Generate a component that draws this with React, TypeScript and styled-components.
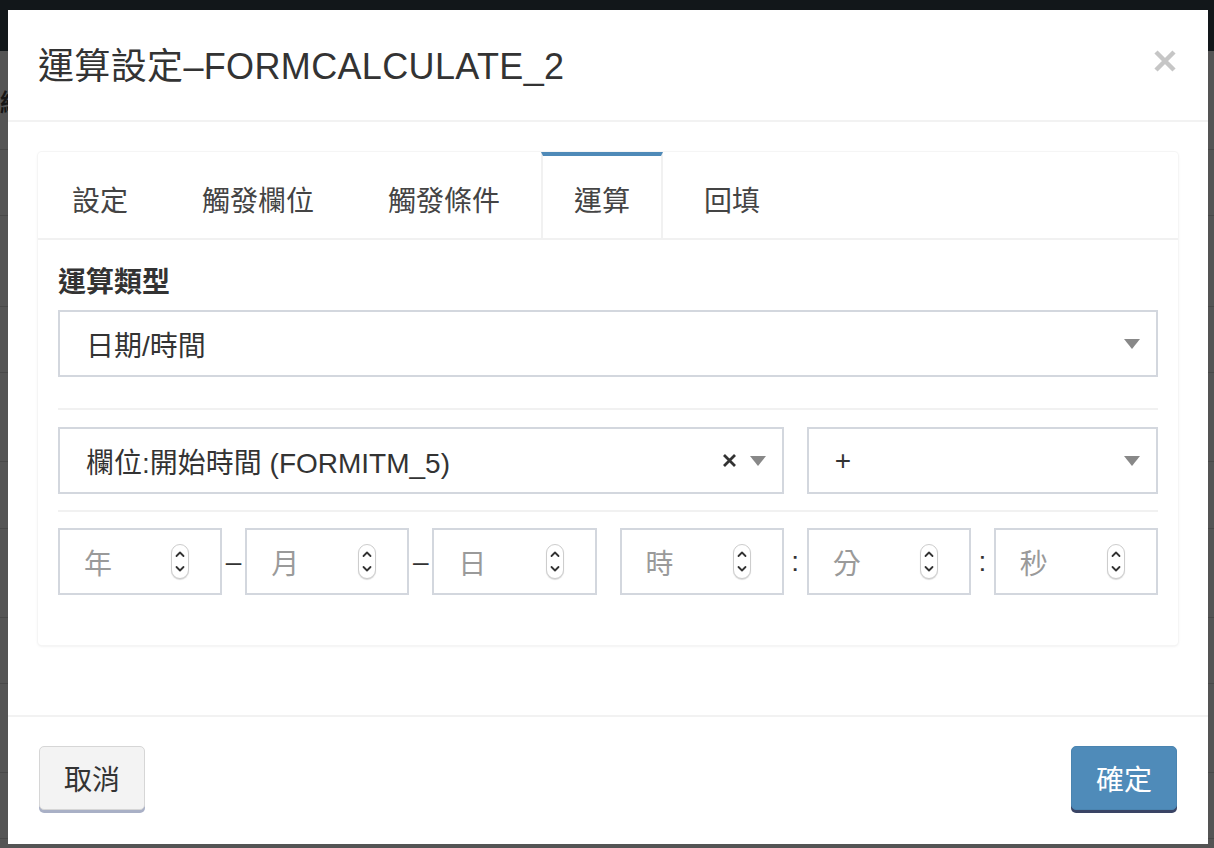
import React from "react";
import styled, { createGlobalStyle } from "styled-components";

const GlobalStyle = createGlobalStyle`
  html, body { margin: 0; padding: 0; background: #545454; }
  body {
    font-family: "Liberation Sans", "Noto Sans CJK TC", sans-serif;
    overflow: hidden;
  }
  * { box-sizing: border-box; }
`;

const Screen = styled.div`
  position: relative;
  width: 1214px;
  height: 848px;
  overflow: hidden;
  background: #545454;
`;

const NavBar = styled.div`
  height: 51px;
  background: #12171a;
`;

const TableRow = styled.div<{ $h: number }>`
  height: ${(p) => p.$h}px;
  border-bottom: 1px solid #484848;
  display: flex;
  align-items: center;
`;

const HeaderCell = styled.span`
  margin-left: 0;
  font-size: 24px;
  font-weight: 700;
  color: #161616;
`;

const Modal = styled.div`
  position: absolute;
  left: 8px;
  top: 10px;
  width: 1200px;
  height: 834px;
  background: #fff;
  display: flex;
  flex-direction: column;
`;

const ModalHeader = styled.div`
  height: 112px;
  padding: 0 30px;
  display: flex;
  align-items: center;
  justify-content: space-between;
  border-bottom: 2px solid #f2f2f2;
`;

const Title = styled.h4`
  margin: 3px 0 0;
  font-size: 36px;
  font-weight: 400;
  line-height: 1;
  letter-spacing: 0.35px;
  color: #333;
`;

const CloseButton = styled.button`
  border: 0;
  background: none;
  padding: 0;
  margin: -8px 2px 0 0;
  width: 22px;
  height: 22px;
  display: flex;
  cursor: pointer;
`;

const ModalBody = styled.div`
  flex: 1;
  padding: 30px 30px 0;
`;

const Card = styled.div`
  height: 493px;
  border-radius: 4px;
  box-shadow: 0 0 0 1px #f5f5f5, 0 1px 3px rgba(0, 0, 0, 0.1);
  background: #fff;
`;

const Tabs = styled.div`
  display: flex;
  gap: 8px;
  padding-left: 1px;
  border-bottom: 2px solid #f1f1f1;
`;

const Tab = styled.div<{ $active?: boolean }>`
  height: 86px;
  padding: 3px 31px 0;
  border: 2px solid ${(p) => (p.$active ? "#f1f1f1" : "transparent")};
  border-top: 4px solid ${(p) => (p.$active ? "#4f8ab8" : "transparent")};
  border-bottom: 0;
  display: flex;
  align-items: center;
  font-size: 28px;
  color: #444;
  white-space: nowrap;
`;

const Panel = styled.div`
  padding: 23px 20px 0;
`;

const Label = styled.div`
  font-size: 28px;
  font-weight: 700;
  line-height: 40px;
  color: #333;
`;

const Field = styled.div<{ $span?: string }>`
  height: 67px;
  border: 2px solid #d3d7de;
  display: flex;
  align-items: center;
  padding: 0 16px 0 26px;
  font-size: 28px;
  color: #333;
  white-space: nowrap;
  grid-column: ${(p) => p.$span || "auto"};
`;

const TypeSelect = styled(Field)`
  margin-top: 7px;
`;

const Arrow = styled.span`
  margin-left: auto;
  width: 0;
  height: 0;
  border-left: 8px solid transparent;
  border-right: 8px solid transparent;
  border-top: 10px solid #888;
`;

const Clear = styled.span`
  margin-left: auto;
  margin-right: 13px;
  display: flex;
`;

const ClearNext = styled(Arrow)`
  margin-left: 0;
`;

const Divider = styled.div<{ $top: number; $bottom: number }>`
  height: 2px;
  background: #f1f1f1;
  margin: ${(p) => p.$top}px 0 ${(p) => p.$bottom}px;
`;

const Grid = styled.div`
  display: grid;
  grid-template-columns: 1fr 23px 1fr 23px 1fr 23px 1fr 23px 1fr 23px 1fr;
  align-items: center;
`;

const NumberInput = styled(Field)`
  padding: 0 31px 0 24px;
  color: #9a9a9a;
`;

const Spinner = styled.span`
  margin-left: auto;
  width: 18px;
  height: 35px;
  border: 1px solid #cdcdcd;
  border-radius: 9px;
  box-shadow: 0 1px 1px rgba(0, 0, 0, 0.15);
  display: flex;
  background: #fff;
`;

const Sep = styled.span`
  text-align: center;
  font-size: 28px;
  color: #333;
`;

const ModalFooter = styled.div`
  height: 129px;
  border-top: 2px solid #f2f2f2;
  padding: 29px 31px 0;
  display: flex;
  justify-content: space-between;
  align-items: flex-start;
`;

const Button = styled.button<{ $primary?: boolean }>`
  height: 64px;
  padding: 6px 24px 0;
  border-radius: 5px;
  font-family: inherit;
  font-size: 28px;
  line-height: 1;
  cursor: pointer;
  border: 1px solid ${(p) => (p.$primary ? "#4a84b0" : "#d6d6d6")};
  background: ${(p) => (p.$primary ? "#4f8bb9" : "#f3f3f3")};
  color: ${(p) => (p.$primary ? "#fff" : "#333")};
  box-shadow: 0 3px 0 ${(p) => (p.$primary ? "#3a4465" : "#a9b0c6")};
`;

const SpinnerIcon = () => (
  <Spinner>
    <svg width="16" height="33" viewBox="0 0 16 33">
      <polyline points="4.5,11 8,7.5 11.5,11" fill="none" stroke="#333" strokeWidth="1.8" strokeLinecap="round" strokeLinejoin="round" />
      <polyline points="4.5,22 8,25.5 11.5,22" fill="none" stroke="#333" strokeWidth="1.8" strokeLinecap="round" strokeLinejoin="round" />
    </svg>
  </Spinner>
);

const rows = [99, 66, 91, 66, 89, 67, 89, 66, 89, 66];

const dateParts: { label: string; sep?: string }[] = [
  { label: "年", sep: "–" },
  { label: "月", sep: "–" },
  { label: "日" },
  { label: "時", sep: ":" },
  { label: "分", sep: ":" },
  { label: "秒" },
];

export default function App() {
  return (
    <Screen>
      <GlobalStyle />
      <NavBar />
      {rows.map((h, i) => (
        <TableRow key={i} $h={h}>
          {i === 0 && <HeaderCell>編輯</HeaderCell>}
        </TableRow>
      ))}
      <Modal>
        <ModalHeader>
          <Title>運算設定–FORMCALCULATE_2</Title>
          <CloseButton aria-label="close">
            <svg width="22" height="22" viewBox="0 0 22 22">
              <path d="M2 2 L20 20 M20 2 L2 20" stroke="#c6c6c6" strokeWidth="4.5" />
            </svg>
          </CloseButton>
        </ModalHeader>
        <ModalBody>
          <Card>
            <Tabs>
              <Tab>設定</Tab>
              <Tab>觸發欄位</Tab>
              <Tab>觸發條件</Tab>
              <Tab $active>運算</Tab>
              <Tab>回填</Tab>
            </Tabs>
            <Panel>
              <Label>運算類型</Label>
              <TypeSelect>
                日期/時間
                <Arrow />
              </TypeSelect>
              <Divider $top={31} $bottom={17} />
              <Grid>
                <Field $span="1 / 8">
                  欄位:開始時間 (FORMITM_5)
                  <Clear>
                    <svg width="15" height="15" viewBox="0 0 15 15">
                      <path d="M2 2 L13 13 M13 2 L2 13" stroke="#333" strokeWidth="2.8" />
                    </svg>
                  </Clear>
                  <ClearNext />
                </Field>
                <Field $span="9 / 12">
                  +
                  <Arrow />
                </Field>
              </Grid>
              <Divider $top={16} $bottom={16} />
              <Grid>
                {dateParts.map((d, i) => (
                  <React.Fragment key={d.label}>
                    <NumberInput>
                      {d.label}
                      <SpinnerIcon />
                    </NumberInput>
                    {i < 5 && <Sep>{d.sep}</Sep>}
                  </React.Fragment>
                ))}
              </Grid>
            </Panel>
          </Card>
        </ModalBody>
        <ModalFooter>
          <Button>取消</Button>
          <Button $primary>確定</Button>
        </ModalFooter>
      </Modal>
    </Screen>
  );
}
